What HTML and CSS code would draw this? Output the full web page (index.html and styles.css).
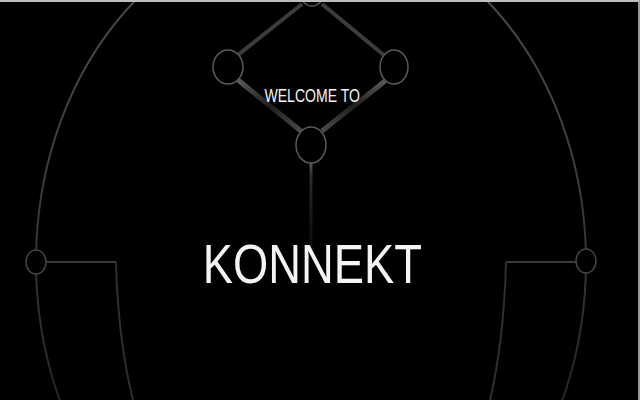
FILE: index.html
```html
<!DOCTYPE html>
<html lang="en">
<head>
  <meta charset="UTF-8">
  <meta name="viewport" content="width=device-width, initial-scale=1.0">
  <title>Konnekt</title>
  <link rel="stylesheet" href="styles.css">
</head>
<body>
  <div class="stage">
    <!-- Network backdrop -->
    <svg class="backdrop" width="638" height="398" viewBox="0 2 638 398">
      <defs>
        <linearGradient id="arc" gradientUnits="userSpaceOnUse" x1="0" y1="0" x2="0" y2="400">
          <stop offset="0" stop-color="#4a4a4a"/>
          <stop offset="0.6" stop-color="#363636"/>
          <stop offset="1" stop-color="#262626"/>
        </linearGradient>
        <linearGradient id="leg-l" gradientUnits="userSpaceOnUse" x1="238" y1="80" x2="301" y2="131">
          <stop offset="0" stop-color="#5a5a5a"/>
          <stop offset="0.5" stop-color="#1e1e1e"/>
          <stop offset="1" stop-color="#4a4a4a"/>
        </linearGradient>
        <linearGradient id="leg-r" gradientUnits="userSpaceOnUse" x1="385" y1="81" x2="322" y2="131">
          <stop offset="0" stop-color="#5a5a5a"/>
          <stop offset="0.5" stop-color="#1e1e1e"/>
          <stop offset="1" stop-color="#4a4a4a"/>
        </linearGradient>
        <linearGradient id="stem" gradientUnits="userSpaceOnUse" x1="0" y1="163" x2="0" y2="250">
          <stop offset="0" stop-color="#555"/>
          <stop offset="0.15" stop-color="#2c2c2c"/>
          <stop offset="1" stop-color="#0a0a0a"/>
        </linearGradient>
      </defs>

      <ellipse cx="311" cy="262" rx="275" ry="340" fill="none" stroke="url(#arc)" stroke-width="2"/>
      <path d="M46 262 H116" stroke="#3a3a3a" stroke-width="2"/>
      <path d="M576 262 H506" stroke="#3a3a3a" stroke-width="2"/>
      <path d="M116 262 Q118 340 133 400" fill="none" stroke="#2e2e2e" stroke-width="2"/>
      <path d="M506 262 Q504 340 490 400" fill="none" stroke="#2e2e2e" stroke-width="2"/>
      <ellipse cx="36" cy="262" rx="10" ry="12" fill="#000" stroke="#444" stroke-width="1.5"/>
      <ellipse cx="586" cy="261" rx="10" ry="12" fill="#000" stroke="#444" stroke-width="1.5"/>

      <path d="M302 4 L238 55" stroke="#3c3c3c" stroke-width="4"/>
      <path d="M322 4 L385 56" stroke="#3c3c3c" stroke-width="4"/>
      <path d="M238 80 L301 131" stroke="url(#leg-l)" stroke-width="5"/>
      <path d="M385 81 L322 131" stroke="url(#leg-r)" stroke-width="5"/>
      <path d="M311 163 V250" stroke="url(#stem)" stroke-width="3"/>

      <ellipse cx="312" cy="-5" rx="11" ry="11" fill="#000" stroke="#555" stroke-width="1.5"/>
      <ellipse cx="228" cy="67" rx="15" ry="17" fill="#000" stroke="#5a5a5a" stroke-width="1.5"/>
      <ellipse cx="394" cy="67" rx="14" ry="17" fill="#000" stroke="#5a5a5a" stroke-width="1.5"/>
      <ellipse cx="311" cy="145" rx="15" ry="18" fill="#000" stroke="#5a5a5a" stroke-width="1.5"/>
    </svg>

    <div class="intro">
      <p class="welcome"><span>WELCOME TO</span></p>
      <h1 class="brand"><span>KONNEKT</span></h1>
    </div>
  </div>
</body>
</html>
```

FILE: styles.css
```css
body {
  margin: 0;
  background: #000;
  font-family: "Liberation Sans", Arial, sans-serif;
}

.stage {
  position: relative;
  width: 638px;
  height: 398px;
  background: #000;
  border-top: 2px solid #bdbdbd;
  border-right: 2px solid #9a9a9a;
  overflow: hidden;
}

/* Diagram sits behind the titles */
.backdrop {
  position: absolute;
  top: 0;
  left: 0;
}

.intro {
  position: relative;
  width: 624px;
  padding-top: 84px;
  text-align: center;
  color: #f4f4f4;
}

.welcome {
  margin: 0;
  font-size: 18px;
  line-height: 20px;
}

.brand {
  margin: 126px 0 0;
  font-size: 56px;
  line-height: 64px;
  font-weight: normal;
}

/* Source art is horizontally squeezed */
.welcome span,
.brand span {
  display: inline-block;
  transform: scaleX(0.78);
}

.brand span {
  transform: scaleX(0.81);
}
```
